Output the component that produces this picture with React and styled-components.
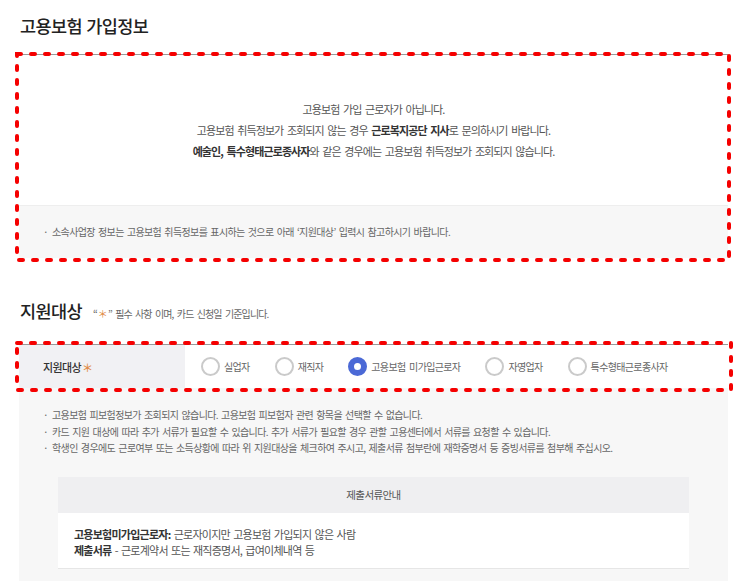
import React from "react";
import styled, { createGlobalStyle } from "styled-components";

const GlobalStyle = createGlobalStyle`
    body {
        margin: 0;
        background: #fff;
        font-family: "Noto Sans CJK KR", "Noto Sans", sans-serif;
        color: #333;
    }
`;

const Page = styled.div`
    padding: 0 21px 0 19px;
`;

const SectionHead = styled.div`
    display: flex;
    align-items: baseline;
    gap: 11px;
    margin: ${(p) => p.$top}px 0 ${(p) => p.$bottom}px 1px;
`;

const SectionTitle = styled.h2`
    margin: 0;
    font-size: 17.5px;
    font-weight: 500;
    letter-spacing: -0.6px;
    word-spacing: 1px;
    line-height: 24px;
    color: #222;
`;

const SubNote = styled.span`
    font-size: 10px;
    letter-spacing: -0.9px;
    word-spacing: 2px;
    color: #666;
`;

const Star = styled.span`
    color: #e08a45;
    margin: 0 1px;
`;

const Panel = styled.div`
    position: relative;
    border-top: 1px solid #999;
`;

// 빨간 점선 표시 (스크린샷 위 주석)
const Mark = styled.svg`
    position: absolute;
    top: ${(p) => p.$t}px;
    left: ${(p) => p.$l}px;
    width: calc(100% - ${(p) => p.$l + p.$r}px);
    height: calc(100% - ${(p) => p.$t + p.$b}px);
    overflow: visible;
    pointer-events: none;
`;

const NoticeBody = styled.div`
    height: 150px;
    display: flex;
    flex-direction: column;
    align-items: center;
    justify-content: center;
    text-align: center;
    font-size: 11px;
    letter-spacing: -0.9px;
    word-spacing: 2px;
    line-height: 21px;
    color: #555;
`;

const Bold = styled.b`
    font-weight: 700;
    color: #333;
`;

const PanelFoot = styled.div`
    background: #f7f7f7;
    border-top: 1px solid #eee;
    height: 52px;
    display: flex;
    align-items: center;
`;

const Bullets = styled.ul`
    list-style: none;
    margin: 0;
    padding: 0 0 0 24px;
    font-size: 10px;
    letter-spacing: -0.62px;
    word-spacing: 1.5px;
    line-height: 16.5px;
    color: #666;
`;

const Bullet = styled.li`
    display: flex;
    &::before {
        content: "·";
        width: 9px;
        flex-shrink: 0;
    }
`;

const Row = styled.div`
    display: flex;
    height: 43px;
`;

const LabelCell = styled.div`
    width: 166px;
    flex-shrink: 0;
    background: #f1f1f4;
    display: flex;
    align-items: center;
    padding-left: 24px;
    box-sizing: border-box;
    font-size: 11px;
    font-weight: 500;
    letter-spacing: -0.6px;
    color: #333;
`;

const Options = styled.div`
    display: flex;
    align-items: center;
    gap: 25px;
    padding-left: 16px;
`;

const Option = styled.label`
    display: flex;
    align-items: center;
    gap: 4px;
    font-size: 10px;
    letter-spacing: -0.65px;
    word-spacing: 2px;
    color: #666;
`;

const Radio = styled.span`
    width: 19px;
    height: 19px;
    box-sizing: border-box;
    border-radius: 50%;
    background: #fff;
    border: ${(p) => (p.$on ? "6px solid #4b69d6" : "2px solid #cacaca")};
`;

const Guide = styled.div`
    background: #f7f7f7;
    padding: 19px 0 14px;
`;

const DocBox = styled.div`
    margin: 20px 39px 0;
    background: #fff;
    border-bottom: 1px solid #e6e6e6;
`;

const DocHead = styled.div`
    height: 36px;
    background: #efeff1;
    display: flex;
    align-items: center;
    justify-content: center;
    font-size: 10.5px;
    letter-spacing: -0.6px;
    color: #555;
`;

const DocBody = styled.div`
    padding: 13px 16px 10px;
    font-size: 11px;
    letter-spacing: -0.75px;
    word-spacing: 1.5px;
    line-height: 16px;
    color: #555;
`;

const options = ["실업자", "재직자", "고용보험 미가입근로자", "자영업자", "특수형태근로종사자"];

const DashMark = ({ t, r, b, l }) => (
    <Mark $t={t} $r={r} $b={b} $l={l}>
        <rect
            x="0"
            y="0"
            width="100%"
            height="100%"
            fill="none"
            stroke="#f50000"
            strokeWidth="4"
            strokeDasharray="4 10"
            strokeLinecap="round"
        />
    </Mark>
);

const App = () => {
    return (
        <Page>
            <GlobalStyle />

            <SectionHead $top={14} $bottom={16}>
                <SectionTitle>고용보험 가입정보</SectionTitle>
            </SectionHead>

            <Panel>
                <NoticeBody>
                    <div>고용보험 가입 근로자가 아닙니다.</div>
                    <div>
                        고용보험 취득정보가 조회되지 않는 경우 <Bold>근로복지공단 지사</Bold>로 문의하시기 바랍니다.
                    </div>
                    <div>
                        <Bold>예술인, 특수형태근로종사자</Bold>와 같은 경우에는 고용보험 취득정보가 조회되지 않습니다.
                    </div>
                </NoticeBody>
                <PanelFoot>
                    <Bullets>
                        <Bullet>소속사업장 정보는 고용보험 취득정보를 표시하는 것으로 아래 ‘지원대상’ 입력시 참고하시기 바랍니다.</Bullet>
                    </Bullets>
                </PanelFoot>
                <DashMark t={-1} r={-1} b={-2} l={-2} />
            </Panel>

            <SectionHead $top={41} $bottom={21}>
                <SectionTitle>지원대상</SectionTitle>
                <SubNote>
                    “<Star>＊</Star>” 필수 사항 이며, 카드 신청일 기준입니다.
                </SubNote>
            </SectionHead>

            <Panel>
                <Row>
                    <LabelCell>
                        지원대상 <Star>＊</Star>
                    </LabelCell>
                    <Options>
                        {options.map((o) => (
                            <Option key={o}>
                                <Radio $on={o === "고용보험 미가입근로자"} />
                                {o}
                            </Option>
                        ))}
                    </Options>
                </Row>
                <DashMark t={-2} r={-3} b={-2} l={-2} />
            </Panel>

            <Guide>
                <Bullets>
                    <Bullet>고용보험 피보험정보가 조회되지 않습니다. 고용보험 피보험자 관련 항목을 선택할 수 없습니다.</Bullet>
                    <Bullet>카드 지원 대상에 따라 추가 서류가 필요할 수 있습니다. 추가 서류가 필요할 경우 관할 고용센터에서 서류를 요청할 수 있습니다.</Bullet>
                    <Bullet>학생인 경우에도 근로여부 또는 소득상황에 따라 위 지원대상을 체크하여 주시고, 제출서류 첨부란에 재학증명서 등 증빙서류를 첨부해 주십시오.</Bullet>
                </Bullets>
                <DocBox>
                    <DocHead>제출서류안내</DocHead>
                    <DocBody>
                        <div>
                            <Bold>고용보험미가입근로자:</Bold> 근로자이지만 고용보험 가입되지 않은 사람
                        </div>
                        <div>
                            <Bold>제출서류</Bold> - 근로계약서 또는 재직증명서, 급여이체내역 등
                        </div>
                    </DocBody>
                </DocBox>
            </Guide>
        </Page>
    );
};

export default App;
